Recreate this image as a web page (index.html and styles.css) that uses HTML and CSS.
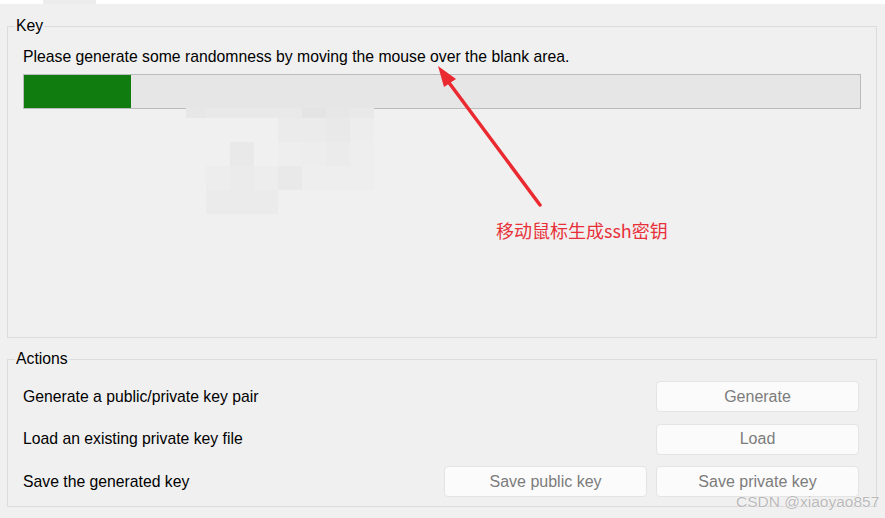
FILE: index.html
```html
<!DOCTYPE html>
<html lang="en">
<head>
<meta charset="utf-8">
<title>PuTTY Key Generator</title>
<link rel="stylesheet" href="styles.css">
</head>
<body>
<div class="topbar"><div class="tab"></div></div>

<fieldset class="group key">
  <legend>Key</legend>
  <div class="msg">Please generate some randomness by moving the mouse over the blank area.</div>
  <div class="bar"><div class="fill" style="width:107px"></div></div>
  <div class="blank"></div>
</fieldset>

<fieldset class="group actions">
  <legend>Actions</legend>
  <div class="row">
    <span class="label">Generate a public/private key pair</span>
    <button class="btn">Generate</button>
  </div>
  <div class="row">
    <span class="label">Load an existing private key file</span>
    <button class="btn">Load</button>
  </div>
  <div class="row">
    <span class="label">Save the generated key</span>
    <button class="btn">Save public key</button>
    <button class="btn">Save private key</button>
  </div>
</fieldset>

<div class="mosaic">
  <i class="c2"></i><i class="c3"></i><i class="c3"></i><i class="c3"></i><i class="c3"></i><i class="c1"></i><i class="c2"></i><i class="c3"></i>
  <i></i><i></i><i></i><i></i><i class="c4"></i><i class="c4"></i><i class="c3"></i><i class="c5"></i>
  <i></i><i></i><i class="c3"></i><i></i><i class="c6"></i><i class="c5"></i><i class="c4"></i><i class="c6"></i>
  <i></i><i class="c5"></i><i class="c4"></i><i class="c5"></i><i class="c3"></i><i class="c6"></i><i class="c6"></i><i class="c6"></i>
  <i></i><i class="c4"></i><i class="c4"></i><i class="c4"></i><i></i><i></i><i></i><i></i>
</div>

<svg class="arrow" width="885" height="518" viewBox="0 0 885 518">
  <line x1="540" y1="205" x2="447" y2="80" stroke="#ea2a30" stroke-width="3.5" stroke-linecap="round"/>
  <polygon points="438,66 456,79 444,87" fill="#ea2a30"/>
</svg>
<div class="note">移动鼠标生成ssh密钥</div>

<div class="watermark">CSDN @xiaoyao857</div>
</body>
</html>
```

FILE: styles.css
```css
html, body {
  margin: 0;
  padding: 0;
}
body {
  width: 885px;
  height: 518px;
  background: #f0f0f0;
  font-family: "Liberation Sans", Arial, sans-serif;
  font-size: 15.75px;
  color: #000;
  position: relative;
  overflow: hidden;
}
.topbar {
  height: 4px;
  background: #ffffff;
}
.tab {
  margin-left: 43px;
  width: 53px;
  height: 4px;
  background: #ededed;
}
.group {
  margin: 0 8px 0 7px;
  border: 1px solid #dcdcdc;
  padding: 0 15px;
  min-width: 0;
}
.group legend {
  margin-left: -8px;
  padding: 0 1px;
  line-height: 18px;
  font-size: 15.75px;
}
.key {
  margin-top: 13px;
  padding-top: 13px;
}
.msg {
  line-height: 18px;
  white-space: nowrap;
}
.bar {
  margin-top: 8px;
  height: 33px;
  border: 1px solid #bcbcbc;
  background: #e6e6e6;
  display: flex;
}
.fill {
  background: #107c10;
  height: 100%;
}
.blank {
  height: 228px;
}
.actions {
  margin-top: 12px;
  padding: 13px 17px 9px 15px;
  display: flex;
  flex-direction: column;
  gap: 11.5px;
}
.row {
  display: flex;
  align-items: center;
  gap: 9px;
}
.label {
  flex: 1;
  line-height: 18px;
}
.btn {
  width: 203px;
  height: 31px;
  border: 1px solid #e4e4e4;
  border-radius: 4px;
  background: #fbfbfb;
  color: #7c7c7c;
  font-family: "Liberation Sans", Arial, sans-serif;
  font-size: 16px;
  padding: 0;
}
.mosaic {
  position: absolute;
  left: 186px;
  top: 108px;
  display: grid;
  grid-template-columns: 20px repeat(7, 24px);
  grid-template-rows: 10px repeat(4, 24px);
}
.mosaic i { display: block; }
.mosaic .c1 { background: #e4e4e4; }
.mosaic .c2 { background: #e7e7e7; }
.mosaic .c3 { background: #e9e9e9; }
.mosaic .c4 { background: #ebebeb; }
.mosaic .c5 { background: #ededed; }
.mosaic .c6 { background: #eeeeee; }
.arrow {
  position: absolute;
  left: 0;
  top: 0;
  pointer-events: none;
}
.note {
  position: absolute;
  left: 496px;
  top: 219px;
  font-family: "Noto Sans CJK SC", sans-serif;
  font-size: 18px;
  line-height: 22px;
  color: #e8303a;
  white-space: nowrap;
}
.watermark {
  position: absolute;
  left: 736px;
  top: 493px;
  font-family: "Liberation Sans", Arial, sans-serif;
  font-size: 15.5px;
  line-height: 18px;
  color: #b8b8b8;
  text-shadow: 0 0 1px #fff, 0 0 1px #fff;
  white-space: nowrap;
}
```
